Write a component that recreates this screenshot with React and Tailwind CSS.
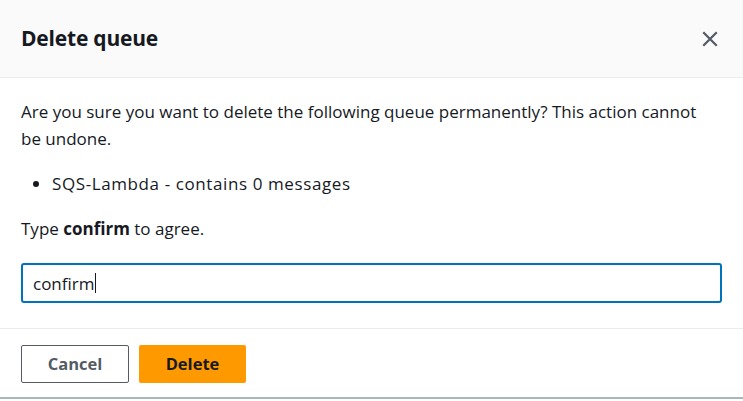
import React from "react";

export default function App() {
  const font = { fontFamily: '"Open Sans", "Noto Sans", Arial, sans-serif' };
  return (
    <div className="w-[743px] h-[401px] bg-white overflow-hidden text-[#16191f]" style={font}>
      <div className="h-[78px] bg-[#fafafa] border-b border-[#eaeded] flex items-center justify-between pl-[21px] pr-[24px]">
        <h2 className="text-[21px] font-bold tracking-[-0.2px] text-[#16191f]">Delete queue</h2>
        <svg width="18" height="18" viewBox="0 0 16 16" className="text-[#545b64]">
          <path d="M2 2 L14 14 M14 2 L2 14" stroke="currentColor" strokeWidth="2" fill="none" />
        </svg>
      </div>
      <div className="px-[21px] pt-[20px] text-[17px] leading-[27px]">
        <p className="max-w-[690px]">
          Are you sure you want to delete the following queue permanently? This action cannot be undone.
        </p>
        <ul className="mt-[18px] pl-[31px] list-disc">
          <li className="tracking-[0.6px]">SQS-Lambda - contains 0 messages</li>
        </ul>
        <p className="mt-[18px]">
          Type <b className="font-bold">confirm</b> to agree.
        </p>
        <div className="mt-[21px] h-[40px] w-[701px] border-2 border-[#0073bb] rounded-[3px] flex items-center px-[10px]">
          <span className="text-[#16191f]">confirm</span>
          <span className="inline-block w-px h-[20px] bg-[#16191f]"></span>
        </div>
      </div>
      <div className="mt-[25px] border-t border-[#eaeded] px-[21px] pt-[16px] pb-[14px] flex gap-[10px]">
        <button className="w-[108px] h-[38px] border border-[#545b64] rounded-[2px] bg-white text-[#545b64] font-bold text-[16.5px]">
          Cancel
        </button>
        <button className="w-[107px] h-[38px] rounded-[2px] bg-[#ff9900] text-[#16191f] font-bold text-[16.5px]">
          Delete
        </button>
      </div>
      <div className="h-[2px] bg-[#aab7b8]"></div>
    </div>
  );
}
